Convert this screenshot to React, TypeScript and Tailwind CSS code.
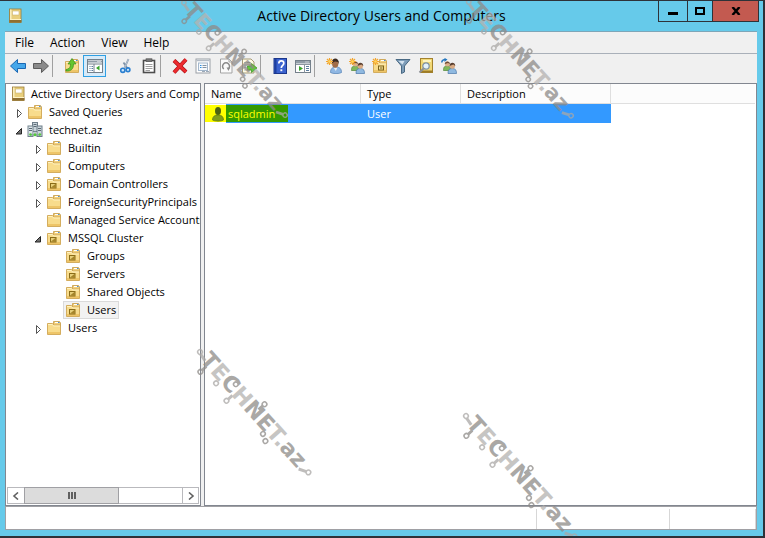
import type { ReactNode } from "react";

function Glyph({ children }: { children: ReactNode }) {
  return (
    <svg className="block size-4 shrink-0" viewBox="0 0 16 16" aria-hidden="true">
      {children}
    </svg>
  );
}

function BookIcon() {
  return (
    <Glyph>
      <rect x="1.500" y="1" width="11.500" height="13.500" fill="#e9cf7c" stroke="#9a7a35" strokeWidth=".8" />
      <rect x="2" y="1.500" width="1.500" height="10.500" fill="#f9eebc" />
      <rect x="1.500" y="12" width="12" height="2.500" fill="#8f6f30" />
      <rect x="4.500" y="3" width="6.500" height="4" fill="#fff" stroke="#cdb571" strokeWidth=".6" />
      <path d="M2 11.500h11" stroke="#fff3c4" />
    </Glyph>
  );
}

function FolderShape() {
  return (
    <>
      <path d="M7.500 1.500h6l1 1.500v3h-7z" fill="#f1cf7a" stroke="#c59a45" strokeWidth=".8" />
      <path d="M9 2.500h3" stroke="#fff" />
      <path d="M12 2.500h1.500" stroke="#4a90d9" />
      <path d="M1.500 3.500h5l1 1.500h7v9.500h-13z" fill="#f8dc8c" stroke="#cfa652" strokeWidth=".9" />
      <path d="M2 4.500h4.500l1 1.500h6.500" fill="none" stroke="#fff2c0" />
      <path d="M2 12h12v2h-12z" fill="#eec568" />
    </>
  );
}

function FolderIcon() {
  return (
    <Glyph>
      <FolderShape />
    </Glyph>
  );
}

function OuIcon() {
  return (
    <Glyph>
      <FolderShape />
      <rect x="4.500" y="7.500" width="5.500" height="4.500" fill="#e6cf7a" stroke="#8a6c18" />
      <path d="M5 11.500l5-4v4.500z" fill="#a5842a" />
    </Glyph>
  );
}

function DomainIcon() {
  return (
    <Glyph>
      <rect x="5.500" y=".5" width="5" height="9" fill="#c8d4db" stroke="#6f7f8a" />
      <path d="M6.500 2.500h3M6.500 4.500h3" stroke="#5c6b76" />
      <rect x="1" y="4" width="5" height="10.500" fill="#dde5ea" stroke="#75858f" />
      <path d="M2 6.500h3M2 8.500h3" stroke="#5c6b76" />
      <rect x="10" y="4" width="5" height="10.500" fill="#cbd6dc" stroke="#6f7f8a" />
      <path d="M11 6.500h3M11 8.500h3" stroke="#5c6b76" />
      <path d="M8 9v4M3 13h10" stroke="#8395a0" />
      <circle cx="3.500" cy="12.500" r="1.300" fill="#53c93c" />
      <circle cx="8" cy="12.800" r="1.500" fill="#53c93c" />
      <circle cx="12.800" cy="12.500" r="1.300" fill="#53c93c" />
    </Glyph>
  );
}

function Burst() {
  return (
    <>
      <path d="M3.500 0v7M0 3.500h7M1 1l5 5M6 1l-5 5" stroke="#f2a52e" strokeWidth="1.200" />
      <circle cx="3.500" cy="3.500" r="1.300" fill="#ffd65c" />
    </>
  );
}

function PeoplePair() {
  return (
    <>
      <path d="M2.500 12.500c0-3.500 1-4.500 3.500-4.500s4 1 4 4.500z" fill="#7fb85c" stroke="#4f8638" strokeWidth=".7" />
      <circle cx="6.300" cy="6" r="2.500" fill="#dcb08a" />
      <path d="M3.800 6c0-3.500 5.200-3.500 5.200 0l-2-1z" fill="#6b4a34" />
      <path d="M7 15.500c0-3.500 1-5 4.200-5s4.300 1.500 4.300 5z" fill="#8fb9e0" stroke="#4a79ab" strokeWidth=".7" />
      <circle cx="11.300" cy="8" r="2.700" fill="#d9ab84" />
      <path d="M8.500 8c0-4.500 5.800-4.500 5.800 0l-2-1.500z" fill="#5b4030" />
    </>
  );
}

const toolIcons: Record<string, ReactNode> = {
  Back: (
    <path d="M.5 8l7-6.500v4h8v5h-8v4z" fill="#45a7ea" stroke="#1a67b2" strokeLinejoin="round" />
  ),
  Forward: (
    <path d="M15.500 8l-7-6.500v4h-8v5h8v4z" fill="#8a8a8a" stroke="#5c5c5c" strokeLinejoin="round" />
  ),
  "Up one level": (
    <>
      <FolderShape />
      <path d="M2 11.500c3.500-.5 4.500-2.500 4.500-5.500h-2.500l4-5.500 4 5.500h-2.500c0 5-2.500 7.500-7.500 7z" fill="#63c62e" stroke="#3b8d18" strokeWidth=".7" />
    </>
  ),
  "Show console tree": (
    <>
      <rect x=".5" y="1.500" width="15" height="13" fill="#fff" stroke="#74808b" />
      <path d="M1 2.500h14v2h-14z" fill="#8f9ba6" />
      <path d="M10.500 3.500h1M12.500 3.500h1" stroke="#fff" />
      <path d="M1 6h14M7 6v8.500" stroke="#74808b" />
      <path d="M2.500 8.500h1M4.500 8.500h1.500M2.500 10.500h1M4.500 10.500h1.500M2.500 12.500h1M4.500 12.500h1.500" stroke="#5b7d9e" />
      <path d="M12.500 7.500v5l-3.500-2.500z" fill="#3aa52b" />
    </>
  ),
  Cut: (
    <>
      <path d="M10.500 1l-4 9M5.500 4.500l4 6" stroke="#8093a8" strokeWidth="1.800" />
      <path d="M10.500 1l-4 9" stroke="#d6e1ec" strokeWidth=".6" />
      <circle cx="4.800" cy="12.300" r="2.100" fill="#cde6fb" stroke="#2a7fd0" strokeWidth="1.600" />
      <circle cx="10" cy="11.800" r="1.900" fill="#cde6fb" stroke="#2a7fd0" strokeWidth="1.600" />
    </>
  ),
  Paste: (
    <>
      <rect x="2.500" y="2.500" width="11" height="12" fill="#fff" stroke="#4d4d4d" strokeWidth="1.600" />
      <rect x="5" y=".8" width="6" height="2.800" fill="#777" stroke="#444" strokeWidth=".6" />
      <path d="M4.500 6.500h7M4.500 8.500h7M4.500 10.500h7M4.500 12.500h4.500" stroke="#a0a0a0" />
    </>
  ),
  Delete: (
    <>
      <path d="M2 2.500l12 11.500M14 1.500l-12 13" stroke="#a90f14" strokeWidth="4" />
      <path d="M2 2.500l12 11.500M14 1.500l-12 13" stroke="#ec2b2f" strokeWidth="2.600" />
    </>
  ),
  Properties: (
    <>
      <rect x="1" y="1" width="14" height="14" fill="#fff" stroke="#9a9fa6" />
      <path d="M1.500 2.500h13" stroke="#b4bcc6" strokeWidth="1.500" />
      <rect x="3.500" y="5" width="9" height="7.500" fill="#f5f9fd" stroke="#a3b7cc" />
      <path d="M5 7.500h1.500M5 9.500h1.500" stroke="#2a8fe0" />
      <path d="M7.500 7.500h4M7.500 9.500h4" stroke="#8592a0" />
      <path d="M7 13.500h3M11 13.500h3" stroke="#9daab7" />
    </>
  ),
  Refresh: (
    <>
      <path d="M2.500 1h8.500l3 3v11h-11.500z" fill="#fafafa" stroke="#a3a3a3" />
      <path d="M11 1v3h3" fill="none" stroke="#a3a3a3" />
      <path d="M5.800 11a3.500 3.500 0 1 1 4.500 0" fill="none" stroke="#8a8a8a" strokeWidth="1.500" />
      <path d="M8.500 9.500h3.500l-1.500 3.500z" fill="#8a8a8a" />
    </>
  ),
  "Export list": (
    <>
      <path d="M1.500 1h8.500l3 3v11h-11.500z" fill="#fffbe5" stroke="#a59a78" />
      <path d="M3.500 4.500h1M3.500 7h1M3.500 9.500h1M3.500 12h1" stroke="#4b88c4" />
      <path d="M5.500 4.500h4M5.500 7h5M5.500 12h4" stroke="#9a9277" />
      <path d="M6.500 8h4v-2.500l5.500 4.500-5.500 4.500v-2.500h-4z" fill="#62c83c" stroke="#359120" strokeWidth=".7" />
    </>
  ),
  Help: (
    <>
      <rect x="2" y=".5" width="12.500" height="15" fill="#3b62cf" stroke="#1b378c" />
      <path d="M3.500 1v14" stroke="#1e3f9f" strokeWidth="2" />
      <path d="M6.800 5.500c0-3.500 5-3.200 5-.3 0 2.200-2.500 2.200-2.500 4.800" fill="none" stroke="#fff" strokeWidth="1.700" />
      <rect x="8.400" y="11.300" width="1.900" height="1.900" fill="#fff" />
    </>
  ),
  "Show action pane": (
    <>
      <rect x=".5" y="2.500" width="15" height="12" fill="#fff" stroke="#74808b" />
      <path d="M1 3h14v2.500h-14z" fill="#8f9ba6" />
      <path d="M10.500 4h1M12.500 4h1" stroke="#fff" />
      <path d="M1 6.500h14M9.500 6.500v8" stroke="#8b96a0" />
      <path d="M11 8.500h3M11 10.500h3M11 12.500h3" stroke="#5b7d9e" />
      <path d="M4 8v5l4-2.500z" fill="#3aa52b" />
    </>
  ),
  "New user": (
    <>
      <path d="M4.500 14.500c0-3.500 1.500-5.500 5.500-5.500s5.500 2 5.500 5.500c-2 1.500-9 1.500-11 0z" fill="#8fb7e3" stroke="#527fb3" strokeWidth=".7" />
      <path d="M7.500 9.500l2.300 3.500 1.700-3.500z" fill="#e8eef5" />
      <ellipse cx="9.200" cy="5.500" rx="3.200" ry="4.200" fill="#a06c48" />
      <path d="M6 5c-.5-6 7.500-6 7 1l-1-2-3-.5z" fill="#3b2a20" />
      <Burst />
    </>
  ),
  "New group": (
    <>
      <PeoplePair />
      <Burst />
    </>
  ),
  "New organizational unit": (
    <>
      <FolderShape />
      <rect x="6.500" y="8" width="5" height="4" fill="#f2e19b" stroke="#7c6017" />
      <path d="M8 10h2.500" stroke="#7c6017" />
      <Burst />
    </>
  ),
  Filter: (
    <>
      <path d="M1 1.500h14l-5.500 6.500v6l-3 1.500v-7.500z" fill="#7d9cb8" stroke="#496983" />
      <path d="M3.500 3h6l-2 3.500z" fill="#d4e3ef" />
    </>
  ),
  Find: (
    <>
      <rect x="2.500" y=".5" width="12" height="14" fill="#f1d876" stroke="#a3822e" />
      <path d="M5 3h8" stroke="#fff4bd" strokeWidth="2" />
      <path d="M3 13.500h11.500" stroke="#9e7c26" strokeWidth="2" />
      <circle cx="8" cy="8" r="3.200" fill="#e3f1fb" stroke="#7c8fa0" strokeWidth="1.200" />
      <path d="M5.500 10.500l-4 4" stroke="#8c8f94" strokeWidth="2" />
    </>
  ),
  "Add to group": (
    <>
      <PeoplePair />
      <path d="M.8 4.500c0-2.500 1.500-3 4-3" fill="none" stroke="#2678c0" strokeWidth="1.500" />
      <path d="M3.500 0l3 1.500-3 2.500z" fill="#2678c0" />
    </>
  ),
};

const toolGroups: { items: string[]; line: boolean }[] = [
  { items: ["Back", "Forward"], line: true },
  { items: ["Up one level", "Show console tree"], line: false },
  { items: ["Cut", "Paste"], line: true },
  { items: ["Delete", "Properties", "Refresh", "Export list"], line: true },
  { items: ["Help", "Show action pane"], line: true },
  {
    items: ["New user", "New group", "New organizational unit", "Filter", "Find", "Add to group"],
    line: false,
  },
];

function Toolbar() {
  return (
    <div className="flex h-[30px] shrink-0 items-start border-t border-[#a9b0b9] pt-px pl-px">
      {toolGroups.map((group) => (
        <div key={group.items[0]} className="flex items-center">
          {group.items.map((name) => (
            <button
              key={name}
              type="button"
              aria-label={name}
              className={
                name === "Show console tree"
                  ? "flex h-[22px] w-[23px] items-center justify-center border border-[#2f9fe3] bg-[#d7ebf9]"
                  : "flex h-[22px] w-[23px] items-center justify-center"
              }
            >
              <Glyph>{toolIcons[name]}</Glyph>
            </button>
          ))}
          <span className={group.line ? "mr-[7px] h-[22px] w-px bg-[#a0a0a0]" : "w-2"} />
        </div>
      ))}
    </div>
  );
}

type Node = {
  label: string;
  depth: 0 | 1 | 2 | 3;
  icon: "book" | "folder" | "ou" | "domain";
  state?: "open" | "closed";
  selected?: boolean;
};

const nodes: Node[] = [
  { label: "Active Directory Users and Computers", depth: 0, icon: "book" },
  { label: "Saved Queries", depth: 1, icon: "folder", state: "closed" },
  { label: "technet.az", depth: 1, icon: "domain", state: "open" },
  { label: "Builtin", depth: 2, icon: "folder", state: "closed" },
  { label: "Computers", depth: 2, icon: "folder", state: "closed" },
  { label: "Domain Controllers", depth: 2, icon: "ou", state: "closed" },
  { label: "ForeignSecurityPrincipals", depth: 2, icon: "folder", state: "closed" },
  { label: "Managed Service Accounts", depth: 2, icon: "folder" },
  { label: "MSSQL Cluster", depth: 2, icon: "ou", state: "open" },
  { label: "Groups", depth: 3, icon: "ou" },
  { label: "Servers", depth: 3, icon: "ou" },
  { label: "Shared Objects", depth: 3, icon: "ou" },
  { label: "Users", depth: 3, icon: "ou", selected: true },
  { label: "Users", depth: 2, icon: "folder", state: "closed" },
];

const nodeIcons = {
  book: <BookIcon />,
  folder: <FolderIcon />,
  ou: <OuIcon />,
  domain: <DomainIcon />,
};

const indents = { 0: "pl-[3px]", 1: "pl-[7px]", 2: "pl-[26px]", 3: "pl-[45px]" };

function Expander({ state }: { state?: "open" | "closed" }) {
  return (
    <svg className="block h-4 w-3 shrink-0" viewBox="0 0 12 16" aria-hidden="true">
      {state === "closed" && (
        <path d="M4.500 5.500v8l4-4z" fill="#fff" stroke="#555" strokeWidth="1" />
      )}
      {state === "open" && <path d="M8.500 6.500v5.500h-5.500z" fill="#707070" stroke="#262626" />}
    </svg>
  );
}

function Tree() {
  return (
    <ul role="tree" className="flex-1 overflow-hidden pt-px">
      {nodes.map((n, i) => (
        <li key={i} role="treeitem" aria-selected={!!n.selected} className={"flex h-[18px] items-center " + indents[n.depth]}>
          {n.depth > 0 && <Expander state={n.state} />}
          <button
            type="button"
            className={
              n.selected
                ? "flex h-[18px] items-center border border-[#dadada] bg-[#f2f2f2] pr-[2px] pl-px whitespace-nowrap"
                : "flex h-[18px] items-center pl-[2px] whitespace-nowrap"
            }
          >
            {nodeIcons[n.icon]}
            <span className={n.depth > 0 ? "pl-[6px]" : "pl-1"}>{n.label}</span>
          </button>
        </li>
      ))}
    </ul>
  );
}

function Scrollbar() {
  return (
    <div className="mx-px mb-px flex h-[17px] border border-[#b9b9bd] bg-white">
      <button type="button" aria-label="Scroll left" className="flex w-4 items-center justify-center">
        <svg className="size-2" viewBox="0 0 8 8">
          <path d="M6 .5L2 4l4 3.500" fill="none" stroke="#606060" strokeWidth="1.600" />
        </svg>
      </button>
      <div className="-my-px flex w-1/2 items-center justify-center gap-px border border-[#a0a0a4] bg-[#dcdcdc]">
        <span className="h-[7px] w-[2px] bg-[#606060]" />
        <span className="h-[7px] w-[2px] bg-[#606060]" />
        <span className="h-[7px] w-[2px] bg-[#606060]" />
      </div>
      <div className="flex-1" />
      <button type="button" aria-label="Scroll right" className="flex w-4 items-center justify-center border-l border-[#b9b9bd]">
        <svg className="size-2" viewBox="0 0 8 8">
          <path d="M2 .5L6 4 2 7.500" fill="none" stroke="#606060" strokeWidth="1.600" />
        </svg>
      </button>
    </div>
  );
}

function ObjectList() {
  return (
    <table className="w-full table-fixed border-separate border-spacing-0 text-left">
      <colgroup>
        <col className="w-[156px]" />
        <col className="w-[100px]" />
        <col className="w-[150px]" />
        <col />
      </colgroup>
      <thead>
        <tr className="h-[20px] bg-[#fcfcfc]">
          {["Name", "Type", "Description"].map((h) => (
            <th key={h} className="border-r border-b border-[#dfdfdf] p-0 pl-[6px] font-normal">
              {h}
            </th>
          ))}
          <td className="border-b border-[#dfdfdf] p-0" />
        </tr>
      </thead>
      <tbody>
        <tr className="h-[19px] text-white">
          <td className="p-0">
            <div className="flex h-[19px] items-center">
              <span className="flex h-[17px] w-[21px] shrink-0 items-center justify-end bg-[#ffff00]">
                <Glyph>
                  <path d="M2.500 14c0-3.500 2-5 5.500-5s5.500 1.500 5.500 5c-2 1.500-9 1.500-11 0z" fill="#7f9c1c" stroke="#5c7a10" strokeWidth=".7" />
                  <ellipse cx="8" cy="5" rx="3" ry="4" fill="#4d6312" />
                </Glyph>
              </span>
              <span className="flex h-full flex-1 items-center bg-[#3399ff]">
                <span className="flex h-[17px] w-[62px] items-center bg-[#339900] pl-[2px] text-[#ffff00]">
                  sqladmin
                </span>
              </span>
            </div>
          </td>
          <td className="bg-[#3399ff] p-0 pl-[6px]">User</td>
          <td className="bg-[#3399ff] p-0" />
          <td className="p-0" />
        </tr>
      </tbody>
    </table>
  );
}

/* Diagonal brand mark: lettering with small circuit nodes around it. */
function Mark({ place }: { place: string }) {
  return (
    <svg
      className={"pointer-events-none absolute overflow-visible " + place}
      viewBox="0 0 125 135"
      aria-hidden="true"
    >
      <g transform="translate(4 4) rotate(48)" opacity=".75">
        <g fill="none" stroke="#8e8b88" strokeWidth="1.500">
          <circle cx="0" cy="0" r="2.300" stroke="#aaa8a6" />
          <path d="M2 1l8 1" stroke="#aaa8a6" strokeWidth="3" />
          <path d="M15 11v-6" strokeWidth="3" />
          <circle cx="15" cy="13" r="2.300" />
          <circle cx="34" cy="9" r="2.300" stroke="#aaa8a6" />
          <circle cx="48" cy="-5" r="2.300" />
          <circle cx="54" cy="13" r="2.300" stroke="#aaa8a6" />
          <path d="M54 11v-6" stroke="#aaa8a6" strokeWidth="3" />
          <circle cx="82" cy="-13" r="2.300" />
          <path d="M82 -11v6" strokeWidth="3" />
          <circle cx="103" cy="8" r="2.300" />
          <circle cx="110" cy="11" r="2.300" />
          <circle cx="162" cy="0" r="2.300" stroke="#aaa8a6" />
          <path d="M153 5l7-4" stroke="#aaa8a6" strokeWidth="3" />
        </g>
        <text x="6" y="6" fontSize="22" fill="#8e8b88" className="font-['DejaVu_Sans',sans-serif] font-bold">
          T<tspan fill="#b4b2b0">E</tspan>C<tspan fill="#b4b2b0">H</tspan>NE
          <tspan fill="#b4b2b0">T.</tspan>az
        </text>
      </g>
    </svg>
  );
}

export default function App() {
  return (
    <div className="relative flex h-screen flex-col overflow-hidden border-t border-r-2 border-b-2 border-[#2e3238] bg-[#66caea] font-['Open_Sans','Noto_Sans',sans-serif] text-[11px] leading-4 text-black">
      <header className="grid h-[30px] shrink-0 grid-cols-[1fr_auto_1fr]">
        <div className="flex items-center pl-2">
          <BookIcon />
        </div>
        <h1 className="self-center text-[14px] leading-5">Active Directory Users and Computers</h1>
        <div className="mr-1 flex h-[21px] justify-end self-start *:border-b *:border-l *:border-[#2e3238]">
          <button type="button" aria-label="Minimize" className="flex w-[29px] items-center justify-center">
            <span className="mt-1 h-[3px] w-[10px] bg-black" />
          </button>
          <button type="button" aria-label="Maximize" className="flex w-[25px] items-center justify-center">
            <span className="h-2 w-[10px] border-2 border-black" />
          </button>
          <button type="button" aria-label="Close" className="flex w-[47px] items-center justify-center border-r bg-[#c35a50]">
            <svg className="h-2 w-[10px]" viewBox="0 0 10 8">
              <path d="M1.500 0l7 8M8.500 0l-7 8" stroke="#000" strokeWidth="2.400" />
            </svg>
          </button>
        </div>
      </header>

      <div className="mr-[6px] mb-[6px] ml-[5px] flex min-h-0 flex-1 flex-col border-t border-[#7ea6b8] bg-[#f0f0f0]">
        <nav className="flex h-[21px] shrink-0 items-center pl-[2px] text-[12px]">
          {["File", "Action", "View", "Help"].map((m) => (
            <button key={m} type="button" className="px-2">
              {m}
            </button>
          ))}
        </nav>
        <Toolbar />
        <main className="flex min-h-0 flex-1 gap-[3px]">
          <section className="flex w-[196px] shrink-0 flex-col border border-[#828790] bg-white">
            <Tree />
            <Scrollbar />
          </section>
          <section className="min-w-0 flex-1 border border-[#828790] bg-white pr-px">
            <ObjectList />
          </section>
        </main>
        <footer className="flex h-6 shrink-0 border border-[#a0a0a4] bg-white pt-[2px]">
          <span className="flex-1 border-r border-[#d7d7d7]" />
          <span className="w-[133px] border-r border-[#d7d7d7]" />
          <span className="w-[86px] border-r border-[#d7d7d7]" />
        </footer>
      </div>

      <Mark place="left-[180px] top-[-2px] h-[126px] w-[117px]" />
      <Mark place="left-[465px] top-[-3px] h-[128px] w-[118px]" />
      <Mark place="left-[196px] top-[347px] h-[135px] w-[125px]" />
      <Mark place="left-[462px] top-[411px] h-[135px] w-[125px]" />
    </div>
  );
}
